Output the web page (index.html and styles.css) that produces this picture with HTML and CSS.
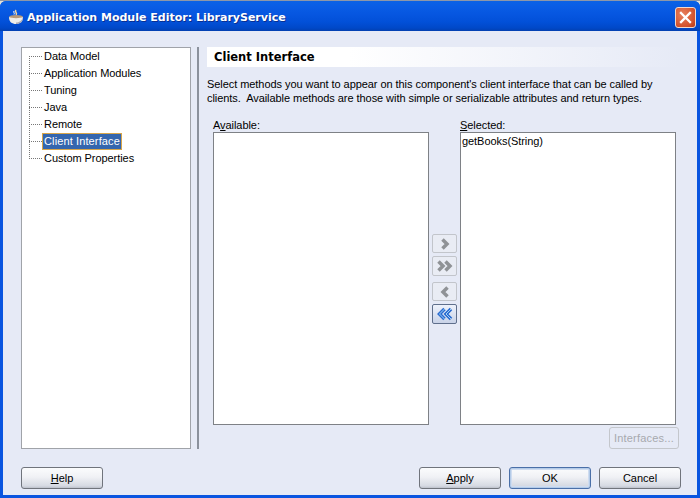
FILE: index.html
```html
<!DOCTYPE html>
<html lang="en">
<head>
<meta charset="utf-8">
<title>Application Module Editor</title>
<link rel="stylesheet" href="styles.css">
</head>
<body>
<div class="backdrop"></div>
<div class="window">
  <header class="titlebar">
    <svg class="app-icon" width="18" height="18" viewBox="0 0 18 18"><path d="M9 1c-2 2 2 3 0 5" fill="none" stroke="#f4d9a0" stroke-width="1.5"/><path d="M7 2c-1 1.500 1 2 0 3.500" fill="none" stroke="#fff" stroke-width="1"/><ellipse cx="9" cy="8" rx="7" ry="2" fill="#b89a78"/><path d="M2 8c0 5 3 7 7 7s7-2 7-7c-2 1.500-12 1.500-14 0z" fill="#efeee9"/><path d="M9 15c4 0 7-2 7-7-1 4-4 5.500-7 5.500z" fill="#a9a9b5"/></svg>
    <span class="title">Application Module Editor: LibraryService</span>
    <button class="close" aria-label="Close"><svg width="13" height="13" viewBox="0 0 13 13"><path d="M2 2l9 9M11 2l-9 9" stroke="#fff" stroke-width="2.300" stroke-linecap="square"/></svg></button>
  </header>
  <div class="client">
    <div class="main">
      <nav class="tree">
        <svg class="tree-lines" width="14" height="110" viewBox="0 0 14 110"><path d="M.5 5v102M0 5.500h14M0 22.500h14M0 39.500h14M0 56.500h14M0 73.500h14M0 90.500h14M0 107.500h14" stroke="#777" stroke-dasharray="1 1" fill="none"/></svg>
        <ul class="tree-list">
          <li>Data Model</li>
          <li>Application Modules</li>
          <li>Tuning</li>
          <li>Java</li>
          <li>Remote</li>
          <li><span class="selected">Client Interface</span></li>
          <li>Custom Properties</li>
        </ul>
      </nav>
      <div class="divider"></div>
      <section class="panel">
        <h1 class="panel-title">Client Interface</h1>
        <p class="desc">Select methods you want to appear on this component's client interface that can be called by<br>clients.&nbsp; Available methods are those with simple or serializable attributes and return types.</p>
        <div class="shuttle">
          <div class="col">
            <label class="field-label">A<u>v</u>ailable:</label>
            <div class="listbox"></div>
          </div>
          <div class="arrows">
            <button class="arrow" aria-label="Add"><svg width="16" height="14" viewBox="0 0 16 14"><path d="M5.500 2.500l4.500 4.500-4.500 4.500" class="chev"/></svg></button>
            <button class="arrow tall" aria-label="Add all"><svg width="18" height="14" viewBox="0 0 18 14"><path d="M2.500 2.500l4.500 4.500-4.500 4.500M9.500 2.500l4.500 4.500-4.500 4.500" class="chev"/></svg></button>
            <button class="arrow gap" aria-label="Remove"><svg width="16" height="14" viewBox="0 0 16 14"><path d="M10.500 2.500l-4.500 4.500 4.500 4.500" class="chev"/></svg></button>
            <button class="arrow active" aria-label="Remove all"><svg width="18" height="14" viewBox="0 0 18 14"><path d="M8.500 2l-5 5 5 5M15 2l-5 5 5 5" class="chev-blue"/><path d="M8.500 2l-5 5 5 5M15 2l-5 5 5 5" class="chev-light"/></svg></button>
          </div>
          <div class="col">
            <label class="field-label"><u>S</u>elected:</label>
            <div class="listbox"><div class="item">getBooks(String)</div></div>
          </div>
        </div>
        <div class="iface-row"><button class="btn-disabled">Interfaces...</button></div>
      </section>
    </div>
    <footer class="footer">
      <button class="btn"><u>H</u>elp</button>
      <div class="footer-right">
        <button class="btn"><u>A</u>pply</button>
        <button class="btn default">OK</button>
        <button class="btn">Cancel</button>
      </div>
    </footer>
  </div>
</div>
</body>
</html>
```
FILE: styles.css
```css
* { box-sizing: border-box; }
html, body { margin: 0; padding: 0; }
body {
  width: 700px;
  height: 498px;
  overflow: hidden;
  background: #e4e2d8;
  font-family: "Liberation Sans", Arial, sans-serif;
  font-size: 11px;
  letter-spacing: -.06px;
  color: #000;
}
.backdrop { height: 1px; background: #8d97a8; }
.window {
  height: 497px;
  display: flex;
  flex-direction: column;
  border-radius: 6px 6px 0 0;
  background: #0a55e0;
  overflow: hidden;
}
.titlebar {
  height: 30px;
  flex: none;
  display: flex;
  align-items: center;
  padding: 3px 4px 0 7px;
  background: linear-gradient(#0b62e4 0, #0a5fe6 10%, #0656e0 45%, #0250d8 70%, #0048c8 90%, #0340b0 100%);
}
.app-icon { flex: none; margin-right: 2px; }
.title {
  flex: 1;
  color: #fff;
  font-family: "DejaVu Sans", sans-serif;
  font-weight: 700;
  font-size: 11px;
  letter-spacing: 0;
  text-shadow: 1px 1px 0 #0a2f90;
}
.close {
  width: 21px;
  height: 21px;
  padding: 0;
  display: flex;
  align-items: center;
  justify-content: center;
  border: 1px solid #f2d8cc;
  border-radius: 3px;
  background: radial-gradient(circle at 35% 35%, #e8825f, #d2512c 70%, #b53a18);
}
.client {
  flex: 1;
  margin: 0 3px 3px;
  padding: 16px 16px 6px 18px;
  background: #e6eaf6;
  display: flex;
  flex-direction: column;
  min-height: 0;
}
.main { height: 402px; display: flex; flex: none; }
.tree {
  width: 170px;
  flex: none;
  position: relative;
  background: #fff;
  border: 1px solid #a0a3a9;
  padding: 1px 0 0 22px;
}
.tree-lines { position: absolute; left: 7px; top: 3px; }
.tree-list { list-style: none; margin: 0; padding: 0; }
.tree-list li { height: 17px; line-height: 15px; white-space: nowrap; }
.selected {
  display: inline-block;
  vertical-align: top;
  width: 80px;
  height: 17px;
  line-height: 15px;
  margin: -1px 0 0 -2px;
  padding: 0 0 0 1px;
  letter-spacing: .12px;
  background: #3466ae;
  color: #fff;
  border: 1px solid #d8a64a;
}
.divider { width: 2px; flex: none; margin-left: 6px; background: #8b919c; }
.panel { width: 473px; flex: none; margin-left: 8px; display: flex; flex-direction: column; }
.panel-title {
  margin: 0;
  height: 20px;
  line-height: 21px;
  padding-left: 7px;
  font-family: "DejaVu Sans", sans-serif;
  font-size: 11.500px;
  font-weight: 700;
  letter-spacing: 0;
  background: linear-gradient(90deg, #fff 0, #fff 30%, #e6eaf6 100%);
}
.desc { margin: 10px 0 0; line-height: 14px; height: 28px; white-space: nowrap; }
.shuttle { display: flex; margin: 13px 0 0 6px; height: 307px; }
.col { width: 216px; flex: none; display: flex; flex-direction: column; }
.field-label { height: 14px; line-height: 14px; }
.listbox {
  height: 293px;
  flex: none;
  background: #fff;
  border: 1px solid #7e8186;
}
.item { padding-left: 1px; line-height: 16px; }
.arrows { width: 31px; flex: none; display: flex; flex-direction: column; align-items: center; padding-top: 116px; gap: 3px; }
.arrow {
  width: 25px;
  height: 19px;
  padding: 0;
  display: flex;
  align-items: center;
  justify-content: center;
  background: #e9ecf4;
  border: 1px solid #c2c5cb;
  border-radius: 2px;
}
.arrow.tall { height: 20px; }
.arrow.gap { margin-top: 3px; }
.arrow.active { height: 20px; background: linear-gradient(#eef2fb, #c9d3e8); border-color: #5f6f8c; }
.chev { fill: none; stroke: #8f9296; stroke-width: 3.500; }
.chev-blue { fill: none; stroke: #2a6bd0; stroke-width: 3.500; }
.chev-light { fill: none; stroke: #9cd0f7; stroke-width: 1; }
.iface-row { display: flex; justify-content: flex-end; margin-top: 2px; padding-right: 1px; }
.btn-disabled {
  width: 70px;
  height: 22px;
  padding: 0;
  font: inherit;
  letter-spacing: .2px;
  color: #a6a9ae;
  background: #e6eaf6;
  border: 1px solid #c4c7cc;
  border-radius: 3px;
}
.footer { display: flex; justify-content: space-between; margin-top: 18px; }
.footer-right { display: flex; gap: 8px; }
.btn {
  width: 82px;
  height: 22px;
  padding: 0;
  font: inherit;
  color: #000;
  border: 1px solid #70747c;
  border-radius: 3px;
  background: linear-gradient(#fbfcfd, #f0f1f5 45%, #d5d9e2 90%, #bcc0ca);
}
.btn.default {
  border-color: #4a6fa8;
  box-shadow: inset 0 0 0 1px #b4cbe8, inset 0 0 0 2px #cfdcf0;
}
```
